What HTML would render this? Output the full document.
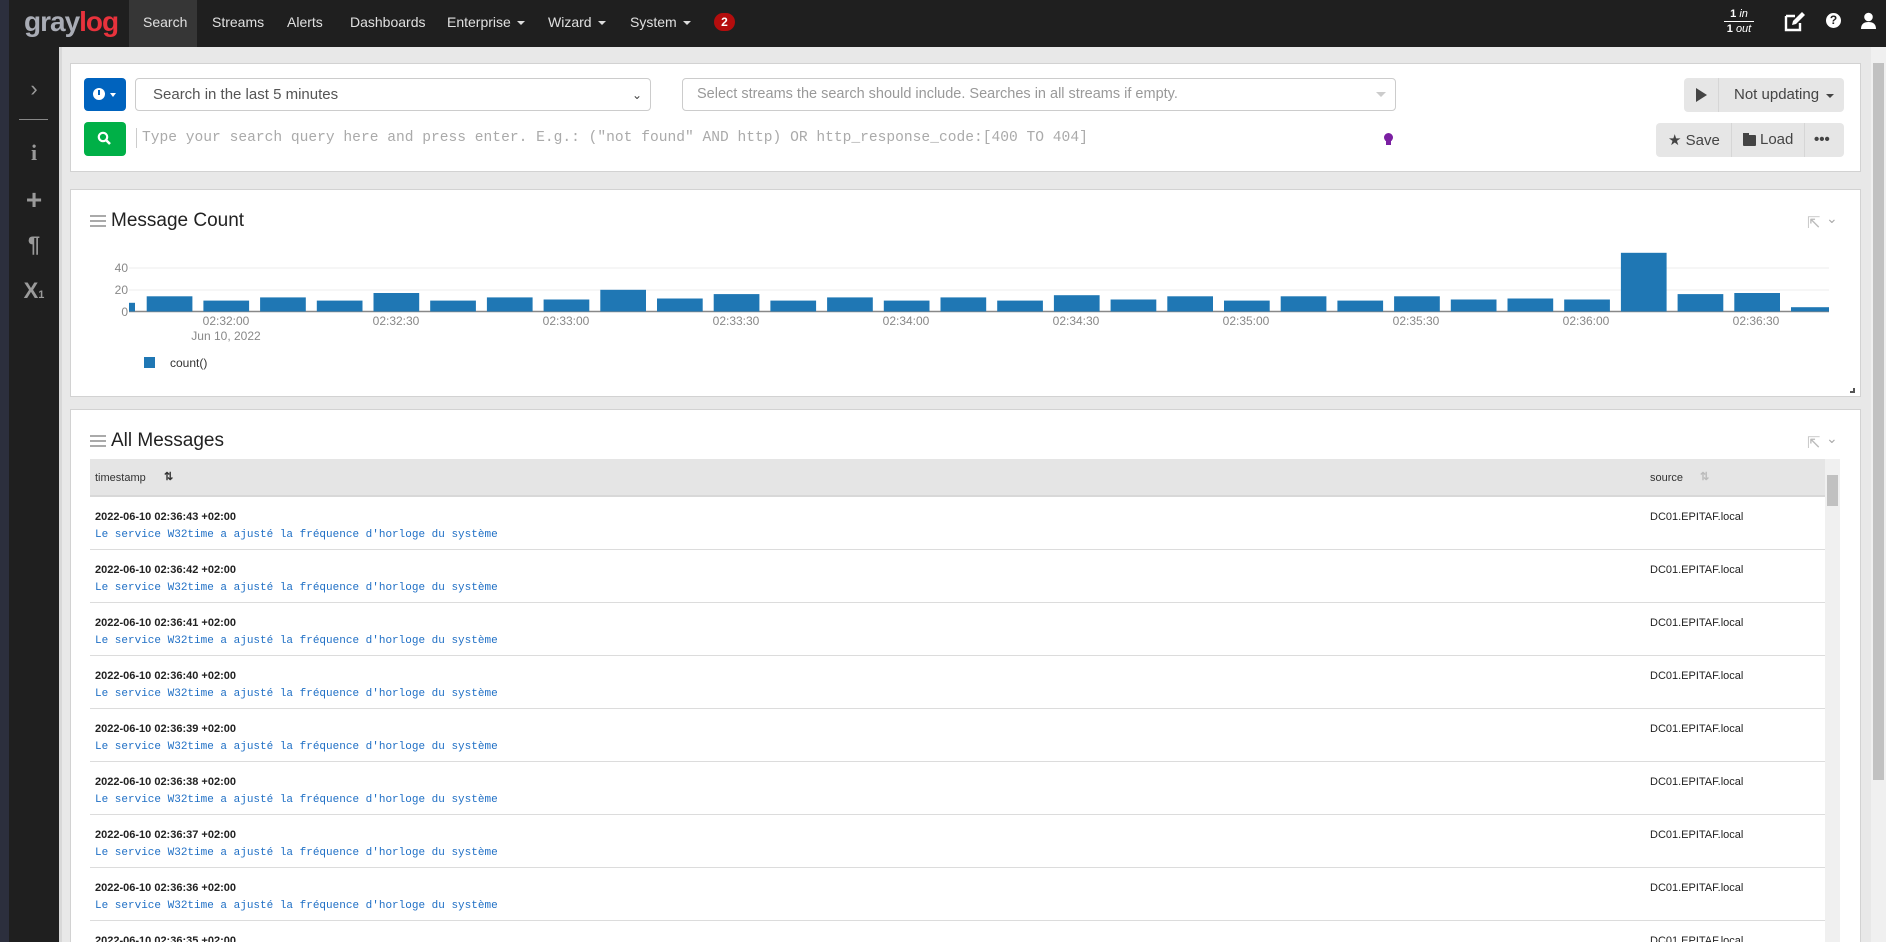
<!DOCTYPE html>
<html style="width:1886px;height:942px;overflow:hidden"><head><meta charset="utf-8">
<style>
*{box-sizing:border-box;margin:0;padding:0}
body{width:1886px;height:942px;overflow:hidden;background:#e8e8e8;font-family:"Liberation Sans",sans-serif;position:relative;color:#333}
.a{position:absolute}
#strip{left:0;top:0;width:9px;height:942px;background:#2c2f3d}
#nav{left:9px;top:0;width:1877px;height:47px;background:#1f1f1f}
.nv{position:absolute;top:0;height:47px;line-height:44px;color:#e0e0e0;font-size:14px}
.car{display:inline-block;width:0;height:0;border-left:4px solid transparent;border-right:4px solid transparent;border-top:4px solid #ddd;margin-left:6px;vertical-align:2px}
#side{left:9px;top:47px;width:50px;height:895px;background:#1f1f1f}
.si{position:absolute;left:9px;width:50px;text-align:center;color:#9a9a9a;font-weight:bold}
.panel{position:absolute;background:#fff;border:1px solid #d2d2d2}
.btn{position:absolute;border-radius:4px}
.gbtn{background:#e6e6e6;color:#444;font-size:15px;text-align:center}
.tit{position:absolute;font-size:19px;color:#222}
.hb{position:absolute;width:16px;height:12px;border-top:2px solid #aaa;border-bottom:2px solid #aaa}
.hb:after{content:"";position:absolute;left:0;right:0;top:3px;border-top:2px solid #aaa}
.row{position:absolute;left:90px;width:1735px;height:53px;border-bottom:1px solid #dcdcdc}
.ts{position:absolute;left:5px;top:14px;font-size:11px;font-weight:bold;color:#222}
.msg{position:absolute;left:5px;top:32px;font-size:11px;font-family:"Liberation Mono",monospace;color:#1f6fc5}
.src{position:absolute;left:1560px;top:14px;font-size:11px;color:#222}
</style></head><body>
<div class="a" id="strip"></div>
<div class="a" id="nav"></div>
<div class="a" style="left:24px;top:6px;font-size:28px;font-weight:bold;letter-spacing:-1px;color:#a9acb5">gray<span style="color:#e8323c">log</span></div>
<div class="a" style="left:129px;top:0;width:68px;height:47px;background:#363636"></div>
<div class="nv" style="left:143px">Search</div>
<div class="nv" style="left:212px">Streams</div>
<div class="nv" style="left:287px">Alerts</div>
<div class="nv" style="left:350px">Dashboards</div>
<div class="nv" style="left:447px">Enterprise<span class="car"></span></div>
<div class="nv" style="left:548px">Wizard<span class="car"></span></div>
<div class="nv" style="left:630px">System<span class="car"></span></div>
<div class="a" style="left:714px;top:13px;width:21px;height:18px;border-radius:9px;background:#b40d0d;color:#fff;font-size:12px;font-weight:bold;text-align:center;line-height:18px">2</div>
<div class="a" style="left:1724px;top:7px;width:30px;color:#fff;font-size:11px;text-align:center;line-height:14px"><div style="border-bottom:1px solid #fff"><b>1</b> <i>in</i></div><div><b>1</b> <i>out</i></div></div>
<svg class="a" style="left:1784px;top:12px" width="22" height="20" viewBox="0 0 22 20"><path d="M2 4h9M2 4v14h14v-7" stroke="#fff" stroke-width="2.4" fill="none"/><path d="M8 13l1-4 9-9 3 3-9 9z" fill="#fff"/></svg>
<div class="a" style="left:1826px;top:13px;width:15px;height:15px;border-radius:50%;background:#fff;color:#1f1f1f;font-size:12px;font-weight:bold;text-align:center;line-height:15px">?</div>
<svg class="a" style="left:1861px;top:12px" width="15" height="18" viewBox="0 0 15 18"><circle cx="7.5" cy="5" r="4.3" fill="#fff"/><path d="M0 17c0-5 3-7 7.5-7s7.5 2 7.5 7z" fill="#fff"/></svg>

<div class="a" id="side"></div>
<div class="si" style="top:76px;font-size:22px;font-weight:normal">&#8250;</div>
<div class="a" style="left:19px;top:119px;width:29px;height:1px;background:#888"></div>
<div class="si" style="top:140px;font-size:22px;font-family:'Liberation Serif',serif">i</div>
<div class="si" style="top:184px;font-size:28px">+</div>
<div class="si" style="top:232px;font-size:22px">&para;</div>
<div class="si" style="top:278px;font-size:22px">X<span style="font-size:11px">1</span></div>

<div class="a" style="left:59px;top:47px;width:3px;height:895px;background:#d8d8d8"></div>
<div class="a" style="left:1871px;top:47px;width:15px;height:895px;background:#f0f0f0"></div>
<div class="a" style="left:1873px;top:63px;width:11px;height:717px;background:#c1c1c1"></div>

<div class="panel" style="left:70px;top:63px;width:1791px;height:109px"></div>
<div class="btn" style="left:84px;top:78px;width:42px;height:33px;background:#0063be"></div>
<div class="a" style="left:93px;top:88px;width:12px;height:12px;border-radius:50%;background:#fff"></div>
<div class="a" style="left:98px;top:90px;width:2px;height:5px;background:#0063be"></div>
<div class="a" style="left:110px;top:93px;border-left:3px solid transparent;border-right:3px solid transparent;border-top:4px solid #fff"></div>
<div class="btn" style="left:135px;top:78px;width:516px;height:33px;border:1px solid #ccc;background:#fff;font-size:15px;color:#555;line-height:32px;padding-left:17px">Search in the last 5 minutes<span style="position:absolute;right:8px;top:0;font-size:12px;color:#444">&#8964;</span></div>
<div class="btn" style="left:682px;top:78px;width:714px;height:33px;border:1px solid #ccc;background:#fff;font-size:14.5px;color:#999;line-height:31px;padding-left:14px">Select streams the search should include. Searches in all streams if empty.</div>
<div class="a" style="left:1376px;top:92px;border-left:5px solid transparent;border-right:5px solid transparent;border-top:5px solid #ccc"></div>
<div class="btn gbtn" style="left:1684px;top:78px;width:160px;height:34px"></div>
<div class="a" style="left:1718px;top:78px;width:1px;height:34px;background:#d6d6d6"></div>
<div class="a" style="left:1696px;top:88px;border-top:7px solid transparent;border-bottom:7px solid transparent;border-left:11px solid #444"></div>
<div class="a" style="left:1734px;top:86px;font-size:15px;color:#444">Not updating</div>
<div class="a" style="left:1826px;top:94px;border-left:4px solid transparent;border-right:4px solid transparent;border-top:4px solid #444"></div>

<div class="btn" style="left:84px;top:122px;width:42px;height:34px;background:#00b047"></div>
<svg class="a" style="left:97px;top:131px" width="15" height="15" viewBox="0 0 15 15"><circle cx="6" cy="6" r="4.2" stroke="#fff" stroke-width="2.2" fill="none"/><path d="M9 9l4 4" stroke="#fff" stroke-width="2.6"/></svg>
<div class="a" style="left:136px;top:128px;width:1px;height:20px;background:#ccc"></div>
<div class="a" style="left:142px;top:130px;font-size:14.6px;font-family:'Liberation Mono',monospace;color:#aaa">Type your search query here and press enter. E.g.: ("not found" AND http) OR http_response_code:[400 TO 404]</div>
<div class="a" style="left:1384px;top:133px;width:9px;height:9px;border-radius:50%;background:#7b1fa2"></div>
<div class="a" style="left:1386px;top:141px;width:5px;height:4px;background:#7b1fa2"></div>
<div class="btn gbtn" style="left:1656px;top:123px;width:188px;height:34px"></div>
<div class="a" style="left:1731px;top:123px;width:1px;height:34px;background:#d6d6d6"></div>
<div class="a" style="left:1804px;top:123px;width:1px;height:34px;background:#d6d6d6"></div>
<div class="a" style="left:1668px;top:131px;font-size:15px;color:#444">&#9733; Save</div>
<div class="a" style="left:1743px;top:135px;width:13px;height:11px;background:#444;border-radius:1px"></div>
<div class="a" style="left:1743px;top:133px;width:6px;height:3px;background:#444"></div>
<div class="a" style="left:1760px;top:131px;font-size:15px;color:#444">Load</div>
<div class="a" style="left:1814px;top:131px;font-size:15px;color:#444;font-weight:bold">&bull;&bull;&bull;</div>

<div class="panel" style="left:70px;top:189px;width:1791px;height:208px"></div>
<div class="hb" style="left:90px;top:215px"></div>
<div class="tit" style="left:111px;top:210px">Message Count</div>
<div class="a" style="left:1807px;top:213px;font-size:16px;color:#bbb">&#8689;</div>
<div class="a" style="left:1826px;top:210px;font-size:14px;color:#aaa">&#8964;</div>
<div class="a" style="left:1850px;top:388px;width:5px;height:5px;border-right:2px solid #555;border-bottom:2px solid #555"></div>

<div class="panel" style="left:70px;top:409px;width:1791px;height:533px;border-bottom:none"></div>
<div class="hb" style="left:90px;top:435px"></div>
<div class="tit" style="left:111px;top:430px">All Messages</div>
<div class="a" style="left:1807px;top:433px;font-size:16px;color:#bbb">&#8689;</div>
<div class="a" style="left:1826px;top:430px;font-size:14px;color:#aaa">&#8964;</div>
<div class="a" style="left:90px;top:459px;width:1735px;height:38px;background:#e5e5e5;border-bottom:2px solid #d8d8d8"></div>
<div class="a" style="left:95px;top:472px;font-size:11px;color:#333">timestamp</div>
<div class="a" style="left:164px;top:470px;font-size:11px;color:#333;font-weight:bold">&#8645;</div>
<div class="a" style="left:1650px;top:472px;font-size:11px;color:#333">source</div>
<div class="a" style="left:1700px;top:470px;font-size:11px;color:#bbb;font-weight:bold">&#8645;</div>
<div class="a" style="left:1825px;top:459px;width:15px;height:483px;background:#f0f0f0"></div>
<div class="a" style="left:1827px;top:475px;width:11px;height:31px;background:#c1c1c1"></div>

<div class="a" style="left:0;top:0;width:1886px;height:942px;overflow:hidden">
<div class="row" style="top:497px"><div class="ts">2022-06-10 02:36:43 +02:00</div><div class="msg">Le service W32time a ajusté la fréquence d'horloge du système</div><div class="src">DC01.EPITAF.local</div></div>
<div class="row" style="top:550px"><div class="ts">2022-06-10 02:36:42 +02:00</div><div class="msg">Le service W32time a ajusté la fréquence d'horloge du système</div><div class="src">DC01.EPITAF.local</div></div>
<div class="row" style="top:603px"><div class="ts">2022-06-10 02:36:41 +02:00</div><div class="msg">Le service W32time a ajusté la fréquence d'horloge du système</div><div class="src">DC01.EPITAF.local</div></div>
<div class="row" style="top:656px"><div class="ts">2022-06-10 02:36:40 +02:00</div><div class="msg">Le service W32time a ajusté la fréquence d'horloge du système</div><div class="src">DC01.EPITAF.local</div></div>
<div class="row" style="top:709px"><div class="ts">2022-06-10 02:36:39 +02:00</div><div class="msg">Le service W32time a ajusté la fréquence d'horloge du système</div><div class="src">DC01.EPITAF.local</div></div>
<div class="row" style="top:762px"><div class="ts">2022-06-10 02:36:38 +02:00</div><div class="msg">Le service W32time a ajusté la fréquence d'horloge du système</div><div class="src">DC01.EPITAF.local</div></div>
<div class="row" style="top:815px"><div class="ts">2022-06-10 02:36:37 +02:00</div><div class="msg">Le service W32time a ajusté la fréquence d'horloge du système</div><div class="src">DC01.EPITAF.local</div></div>
<div class="row" style="top:868px"><div class="ts">2022-06-10 02:36:36 +02:00</div><div class="msg">Le service W32time a ajusté la fréquence d'horloge du système</div><div class="src">DC01.EPITAF.local</div></div>
<div class="row" style="top:921px"><div class="ts">2022-06-10 02:36:35 +02:00</div><div class="msg">Le service W32time a ajusté la fréquence d'horloge du système</div><div class="src">DC01.EPITAF.local</div></div>
</div>

<svg class="a" style="left:0;top:0" width="1886" height="420" font-family="Liberation Sans, sans-serif">
<g stroke="#eee" stroke-width="1"><line x1="129" y1="268" x2="1829" y2="268"/><line x1="129" y1="290" x2="1829" y2="290"/></g>
<g font-size="12" fill="#888" text-anchor="end"><text x="128" y="272">40</text><text x="128" y="294">20</text><text x="128" y="316">0</text></g>
<line x1="129" y1="311.5" x2="1829" y2="311.5" stroke="#888" stroke-width="1.5"/>
<g font-size="12" fill="#888" text-anchor="middle">
<text x="226" y="325">02:32:00</text><text x="226" y="340">Jun 10, 2022</text>
<text x="396" y="325">02:32:30</text><text x="566" y="325">02:33:00</text><text x="736" y="325">02:33:30</text><text x="906" y="325">02:34:00</text><text x="1076" y="325">02:34:30</text><text x="1246" y="325">02:35:00</text><text x="1416" y="325">02:35:30</text><text x="1586" y="325">02:36:00</text><text x="1756" y="325">02:36:30</text>
</g>
<rect x="144" y="357" width="11" height="11" fill="#1f77b4"/>
<text x="170" y="367" font-size="12" fill="#333">count()</text>
<g fill="#1f77b4">
<rect x="129" y="302.8" width="6" height="8.7"/>
<rect x="146.7" y="296.3" width="45.7" height="15.2"/>
<rect x="203.4" y="300.6" width="45.7" height="10.9"/>
<rect x="260.1" y="297.4" width="45.7" height="14.1"/>
<rect x="316.8" y="300.6" width="45.7" height="10.9"/>
<rect x="373.5" y="293" width="45.7" height="18.5"/>
<rect x="430.2" y="300.6" width="45.7" height="10.9"/>
<rect x="486.9" y="297.4" width="45.7" height="14.1"/>
<rect x="543.6" y="299.5" width="45.7" height="12"/>
<rect x="600.3" y="289.8" width="45.7" height="21.7"/>
<rect x="657" y="298.5" width="45.7" height="13"/>
<rect x="713.7" y="294.1" width="45.7" height="17.4"/>
<rect x="770.4" y="300.6" width="45.7" height="10.9"/>
<rect x="827.1" y="297.4" width="45.7" height="14.1"/>
<rect x="883.8" y="300.6" width="45.7" height="10.9"/>
<rect x="940.5" y="297.4" width="45.7" height="14.1"/>
<rect x="997.2" y="300.6" width="45.7" height="10.9"/>
<rect x="1053.9" y="295.2" width="45.7" height="16.3"/>
<rect x="1110.6" y="299.5" width="45.7" height="12"/>
<rect x="1167.3" y="296.3" width="45.7" height="15.2"/>
<rect x="1224" y="300.6" width="45.7" height="10.9"/>
<rect x="1280.7" y="296.3" width="45.7" height="15.2"/>
<rect x="1337.4" y="300.6" width="45.7" height="10.9"/>
<rect x="1394.1" y="296.3" width="45.7" height="15.2"/>
<rect x="1450.8" y="299.5" width="45.7" height="12"/>
<rect x="1507.5" y="298.5" width="45.7" height="13"/>
<rect x="1564.2" y="299.5" width="45.7" height="12"/>
<rect x="1620.9" y="252.8" width="45.7" height="58.7"/>
<rect x="1677.6" y="294.1" width="45.7" height="17.4"/>
<rect x="1734.3" y="293" width="45.7" height="18.5"/>
<rect x="1791" y="307.2" width="38" height="4.3"/>
</g>
</svg>
</body></html>
